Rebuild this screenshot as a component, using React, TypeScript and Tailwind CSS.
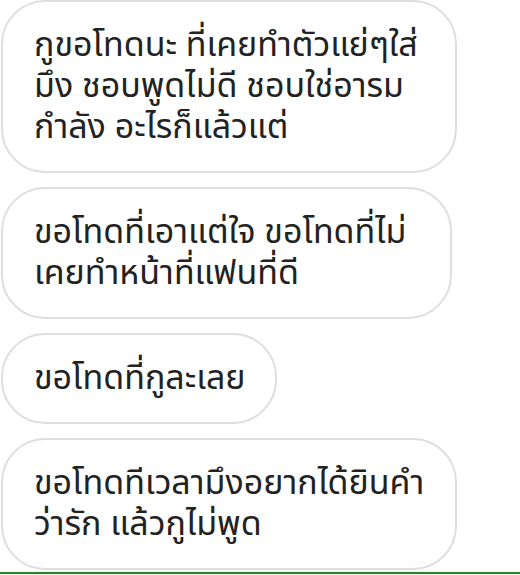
import React from "react";

const bubbles: { w: string; lines: string[] }[] = [
  { w: "w-[456px]", lines: ["กูขอโทดนะ ที่เคยทำตัวแย่ๆใส่", "มึง ชอบพูดไม่ดี ชอบใช่อารม", "กำลัง อะไรก็แล้วแต่"] },
  { w: "w-[451px]", lines: ["ขอโทดที่เอาแต่ใจ ขอโทดที่ไม่", "เคยทำหน้าที่แฟนที่ดี"] },
  { w: "w-[276px]", lines: ["ขอโทดที่กูละเลย"] },
  { w: "w-[456px]", lines: ["ขอโทดทีเวลามึงอยากได้ยินคำ", "ว่ารัก แล้วกูไม่พูด"] },
];

export default function App() {
  return (
    <div
      className="w-[520px] h-[575px] bg-white overflow-hidden flex flex-col"
      style={{ fontFamily: '"Noto Sans Thai", "Noto Sans", sans-serif' }}
    >
      <div className="flex-1 flex flex-col gap-[14px] pl-[1px]">
        {bubbles.map((b, i) => (
          <div
            key={i}
            className={`${b.w} border-2 border-[#dedede] rounded-[44px] px-[31px] py-[23px] bg-white`}
          >
            {b.lines.map((l, j) => (
              <div key={j} className="text-[34px] leading-[41px] text-[#222] whitespace-nowrap">
                {l}
              </div>
            ))}
          </div>
        ))}
      </div>
      <div className="h-[2px] bg-[#1f8a1f]" />
      <div className="h-[1px] bg-white" />
    </div>
  );
}
